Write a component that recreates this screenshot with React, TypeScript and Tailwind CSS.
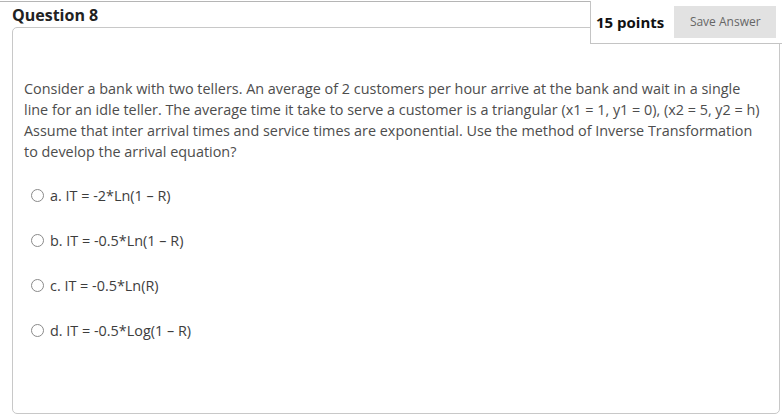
import React from 'react';

const options = [
  'a. IT = -2*Ln(1 – R)',
  'b. IT = -0.5*Ln(1 – R)',
  'c. IT = -0.5*Ln(R)',
  'd. IT = -0.5*Log(1 – R)',
];

export default function App() {
  return (
    <div className="relative w-[782px] h-[415px] bg-white overflow-hidden font-['Open_Sans',sans-serif]">
      <div className="pt-[1px]">
        <div className="border-t border-[#b5b5b5]" />
      </div>

      {/* Header */}
      <h2 className="pl-3 pt-[3px] h-[25px] text-[16px] leading-[20px] font-bold text-[#222]">Question 8</h2>

      {/* Points / save */}
      <div className="absolute right-0 top-[1px] w-[192px] h-[43px] bg-white border-l border-b border-[#c4c4c4] flex items-center pl-[5px] pr-[3px] gap-[10px]">
        <span className="whitespace-nowrap text-[15px] font-bold text-[#111]">15 points</span>
        <button
          type="button"
          className="shrink-0 w-[102px] h-[32px] bg-[#e2e2e2] text-[12px] text-[#666] flex items-center justify-center"
        >
          Save Answer
        </button>
      </div>

      {/* Card */}
      <div className="ml-3 mr-[2px] h-[387px] border border-[#c8c8c8] rounded-[5px] pl-[11px] pr-[4px] pt-[50px]">
        <p className="text-[14.4px] leading-[21px] text-[#4d4d4d] w-[740px]">
          Consider a bank with two tellers. An average of 2 customers per hour arrive at the bank and wait in a single
          line for an idle teller. The average time it take to serve a customer is a triangular (x1 = 1, y1 = 0), (x2 = 5, y2 = h)
          Assume that inter arrival times and service times are exponential. Use the method of Inverse Transformation
          to develop the arrival equation?
        </p>

        <div className="mt-[23px] flex flex-col gap-[24px] pl-[7px]">
          {options.map((opt) => (
            <label key={opt} className="flex items-center gap-[6px] h-[21px] text-[14.4px] text-[#3d3d3d]">
              <span className="w-[13px] h-[13px] rounded-full border border-[#8a8a8a] bg-white shrink-0" />
              <span>{opt}</span>
            </label>
          ))}
        </div>
      </div>
    </div>
  );
}
